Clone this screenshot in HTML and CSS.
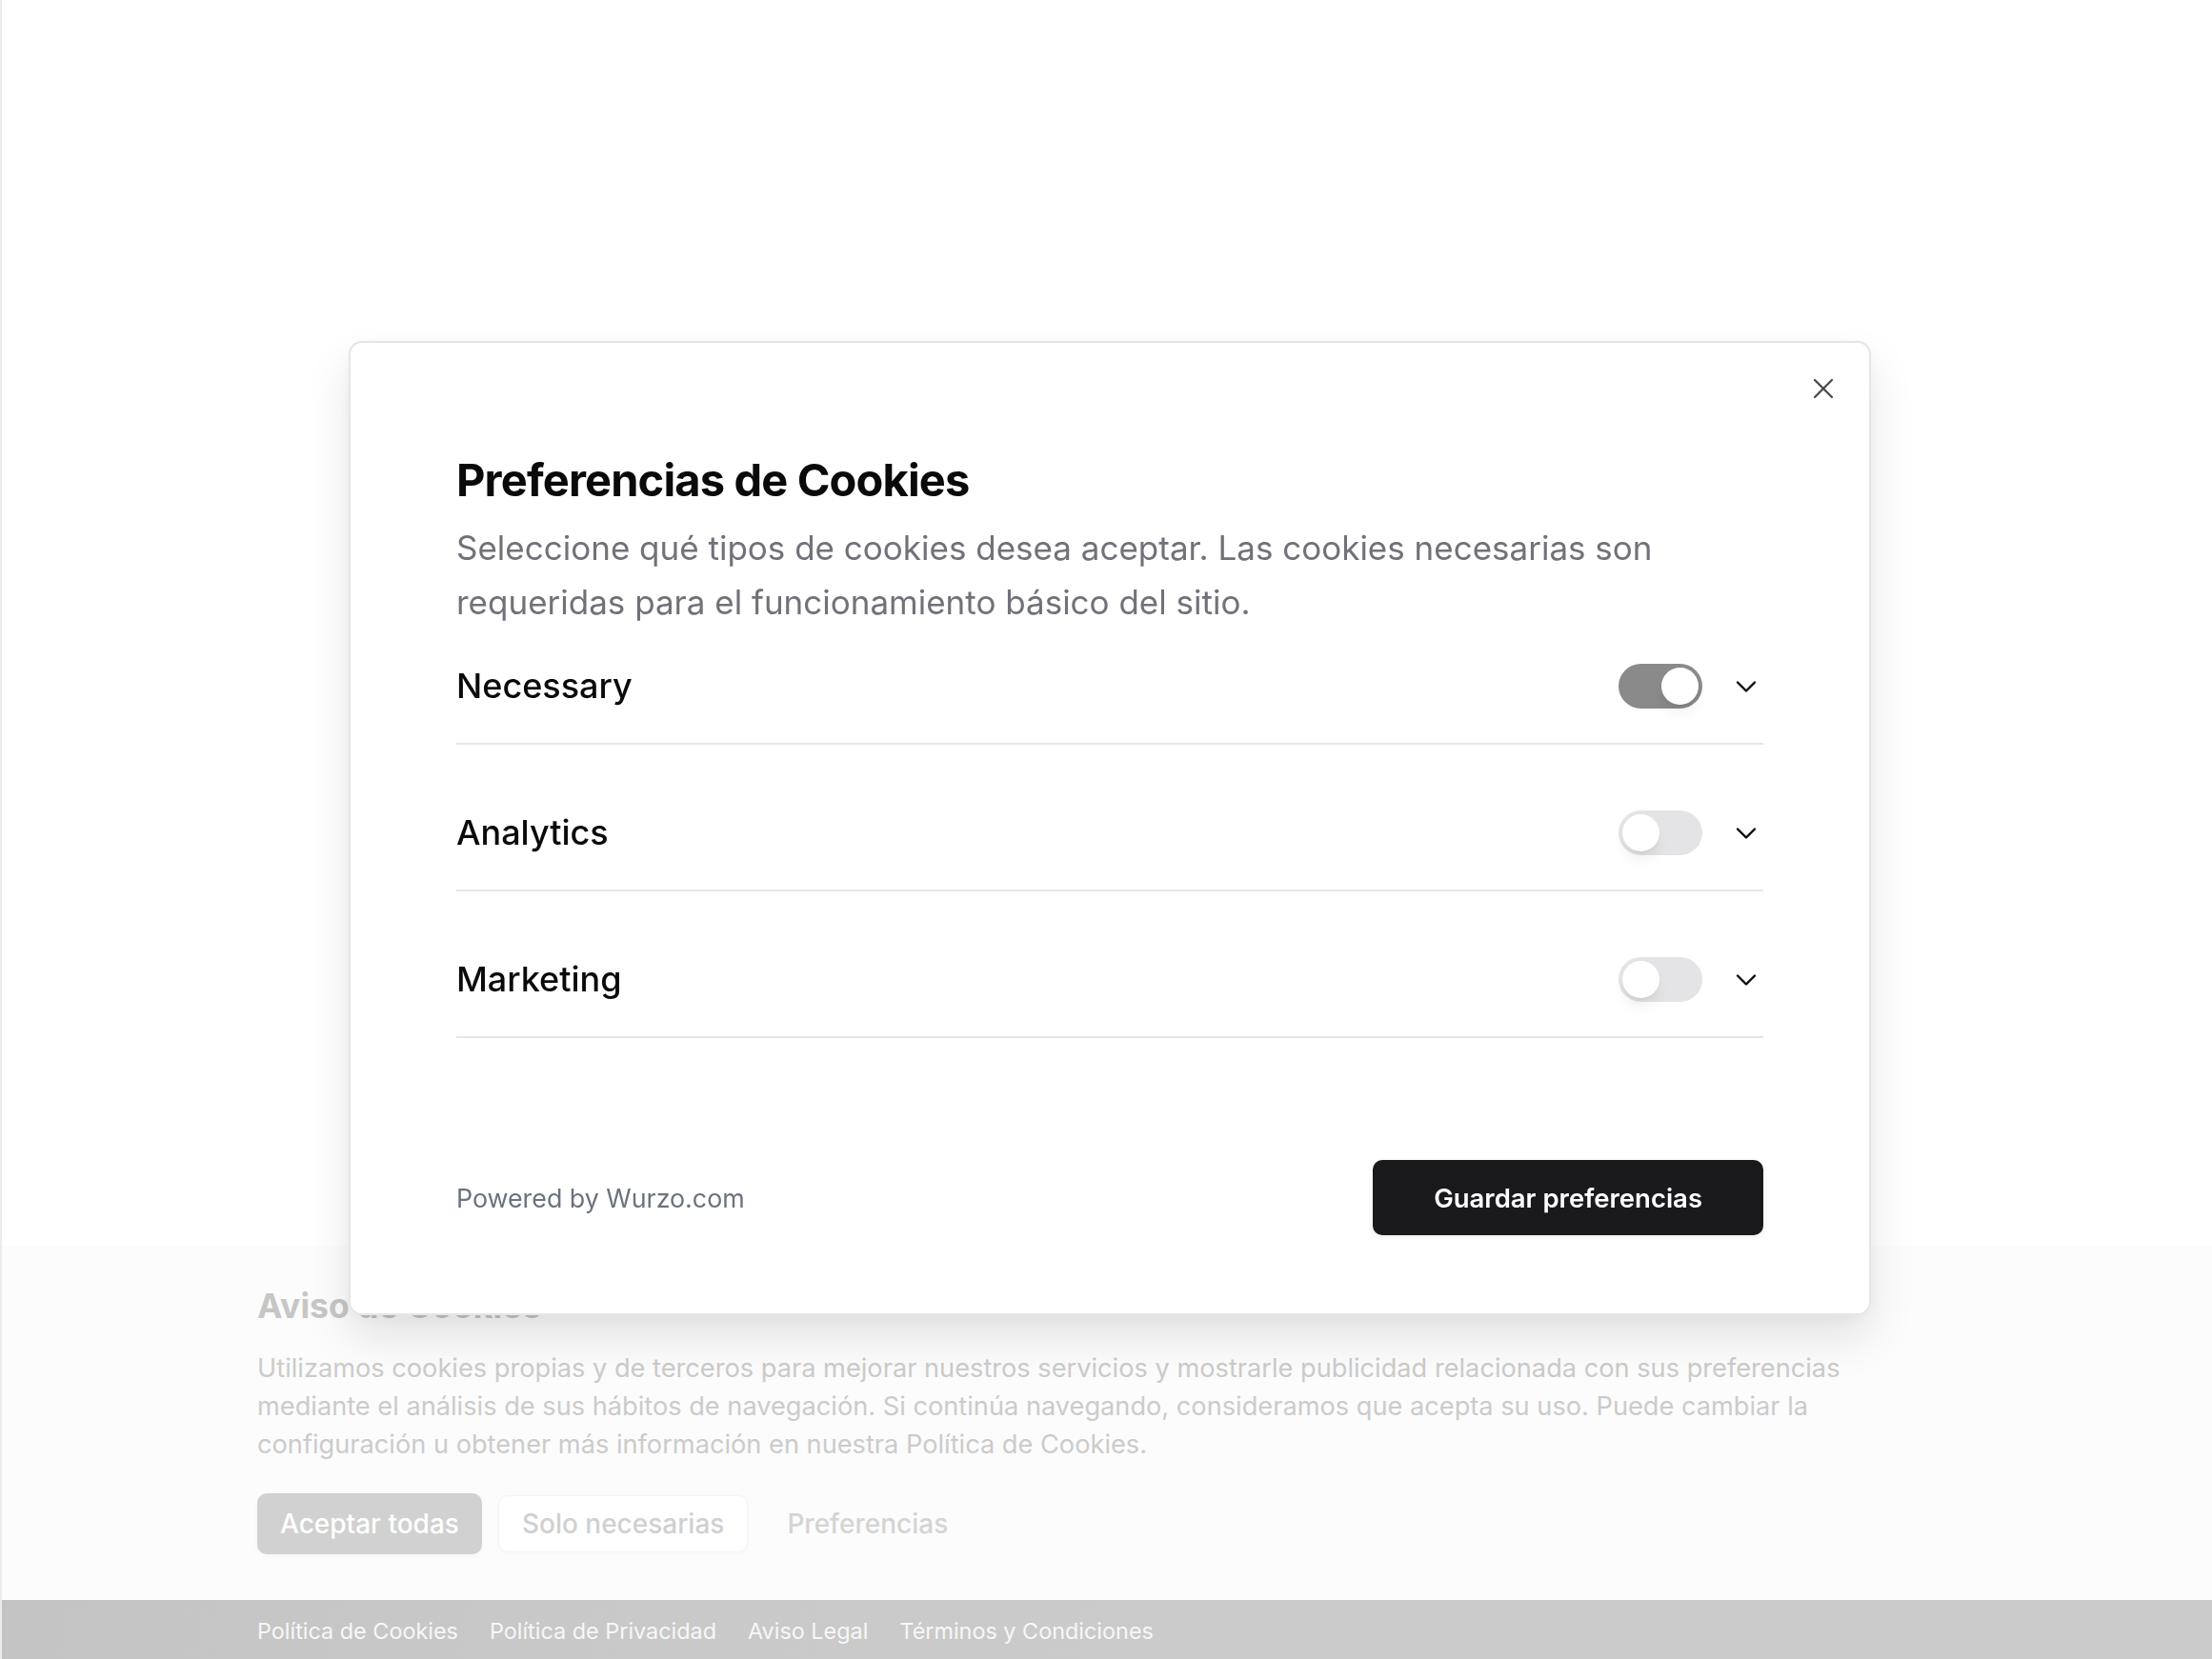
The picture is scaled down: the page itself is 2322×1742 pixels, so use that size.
FILE: index.html
```html
<!DOCTYPE html>
<html lang="es">
<head>
<meta charset="utf-8">
<title>Preferencias de Cookies</title>
<link rel="stylesheet" href="styles.css">
</head>
<body>
<div class="page">
  <main class="page-main"></main>
  <section class="banner">
    <div class="container">
      <h2 class="banner-title">Aviso de Cookies</h2>
      <p class="banner-text">Utilizamos cookies propias y de terceros para mejorar nuestros servicios y mostrarle publicidad relacionada con sus preferencias mediante el análisis de sus hábitos de navegación. Si continúa navegando, consideramos que acepta su uso. Puede cambiar la configuración u obtener más información en nuestra Política de Cookies.</p>
      <div class="banner-actions">
        <button class="btn btn-accept">Aceptar todas</button>
        <button class="btn btn-necessary">Solo necesarias</button>
        <button class="btn btn-prefs">Preferencias</button>
      </div>
    </div>
  </section>
  <footer class="site-footer">
    <nav class="container footer-links">
      <a href="#">Política de Cookies</a>
      <a href="#">Política de Privacidad</a>
      <a href="#">Aviso Legal</a>
      <a href="#">Términos y Condiciones</a>
    </nav>
  </footer>
</div>

<div class="overlay">
  <div class="modal" role="dialog" aria-labelledby="modal-title">
    <button class="modal-close" aria-label="Cerrar">
      <svg viewBox="0 0 24 24" width="36" height="36" fill="none" stroke="currentColor" stroke-width="1.5" stroke-linecap="round" stroke-linejoin="round"><path d="M18 6 6 18"/><path d="m6 6 12 12"/></svg>
    </button>
    <h1 class="modal-title" id="modal-title">Preferencias de Cookies</h1>
    <p class="modal-desc">Seleccione qué tipos de cookies desea aceptar. Las cookies necesarias son requeridas para el funcionamiento básico del sitio.</p>
    <div class="categories">
      <div class="category">
        <span class="category-name">Necessary</span>
        <div class="category-controls">
          <span class="toggle toggle-on"><span class="toggle-knob"></span></span>
          <svg class="chevron" viewBox="0 0 24 24" width="36" height="36" fill="none" stroke="currentColor" stroke-width="1.6" stroke-linecap="round" stroke-linejoin="round"><path d="m6 9 6 6 6-6"/></svg>
        </div>
      </div>
      <div class="category">
        <span class="category-name">Analytics</span>
        <div class="category-controls">
          <span class="toggle"><span class="toggle-knob"></span></span>
          <svg class="chevron" viewBox="0 0 24 24" width="36" height="36" fill="none" stroke="currentColor" stroke-width="1.6" stroke-linecap="round" stroke-linejoin="round"><path d="m6 9 6 6 6-6"/></svg>
        </div>
      </div>
      <div class="category">
        <span class="category-name">Marketing</span>
        <div class="category-controls">
          <span class="toggle"><span class="toggle-knob"></span></span>
          <svg class="chevron" viewBox="0 0 24 24" width="36" height="36" fill="none" stroke="currentColor" stroke-width="1.6" stroke-linecap="round" stroke-linejoin="round"><path d="m6 9 6 6 6-6"/></svg>
        </div>
      </div>
    </div>
    <div class="modal-footer">
      <span class="powered">Powered by Wurzo.com</span>
      <button class="btn-save">Guardar preferencias</button>
    </div>
  </div>
</div>
</body>
</html>
```

FILE: styles.css
```css
* { box-sizing: border-box; }

html, body {
  margin: 0;
  padding: 0;
  height: 100%;
  overflow: hidden;
}

body {
  font-family: Inter, "Noto Sans", "Liberation Sans", sans-serif;
  background: #ffffff;
  border-left: 2px solid #ececec;
  color: #0a0a0a;
}

button {
  font-family: inherit;
  cursor: pointer;
}

/* ---------- background page ---------- */
.page {
  display: flex;
  flex-direction: column;
  height: 100%;
}

.page-main {
  height: 1308px;
  flex: none;
}

.container {
  width: 1784px;
  margin: 0 auto;
}

.banner {
  background: #fcfcfc;
  padding: 40px 0 48px;
}

.banner-title {
  margin: 0;
  font-size: 35.5px;
  line-height: 48px;
  font-weight: 700;
  color: #c6c6c6;
}

.banner-text {
  margin: 21px 0 0;
  max-width: 1740px;
  font-size: 27.2px;
  line-height: 40px;
  color: #cbcbcb;
}

.banner-actions {
  margin-top: 31px;
  display: flex;
  align-items: center;
  gap: 17px;
  height: 64px;
}

.btn {
  font-size: 28px;
  font-weight: 500;
  border-radius: 10px;
  padding: 0 24px;
  border: 0;
}

.btn-accept {
  height: 64px;
  background: #d1d1d1;
  color: #ffffff;
  box-shadow: 0 2px 6px rgba(0, 0, 0, 0.03);
}

.btn-necessary {
  height: 60px;
  background: #ffffff;
  color: #d0d0d0;
  border: 1px solid #f4f4f4;
  box-shadow: 0 1px 4px rgba(0, 0, 0, 0.02);
}

.btn-prefs {
  height: 60px;
  background: transparent;
  color: #d4d4d4;
}

.site-footer {
  flex: 1;
  background: linear-gradient(90deg, #c4c4c4 0%, #c9c9c9 30%, #cbcbcb 55%, #cbcbcb 100%);
  padding: 15px 0 11px;
}

.footer-links {
  display: flex;
  gap: 33px;
}

.footer-links a {
  font-size: 23.4px;
  line-height: 36px;
  color: #f7f7f7;
  text-decoration: none;
}

/* ---------- modal ---------- */
.overlay {
  position: fixed;
  inset: 0;
  display: flex;
  align-items: center;
  justify-content: center;
  padding: 0 0 3px 8px;
}

.modal {
  position: relative;
  width: 1598px;
  background: #ffffff;
  border: 2px solid #e6e6e6;
  border-radius: 14px;
  padding: 116px 111px 82px;
  box-shadow: 0 24px 48px rgba(0, 0, 0, 0.10), 0 4px 16px rgba(0, 0, 0, 0.04);
}

.modal-close {
  position: absolute;
  top: 30px;
  right: 30px;
  width: 36px;
  height: 36px;
  padding: 0;
  border: 0;
  background: transparent;
  color: #4a4a4a;
  display: flex;
}

.modal-title {
  margin: 0;
  font-size: 47px;
  line-height: 56px;
  font-weight: 700;
  letter-spacing: -0.85px;
  color: #0a0a0a;
}

.modal-desc {
  margin: 15px 0 0;
  font-size: 35px;
  line-height: 57px;
  color: #71717a;
}

.categories {
  display: flex;
  flex-direction: column;
  gap: 33px;
}

.category {
  display: flex;
  align-items: center;
  justify-content: space-between;
  padding: 36px 0;
  border-bottom: 2px solid #e6e6e6;
}

.category-name {
  font-size: 36px;
  line-height: 47px;
  font-weight: 500;
  color: #0a0a0a;
}

.category-controls {
  display: flex;
  align-items: center;
  gap: 28px;
}

.toggle {
  display: flex;
  width: 88px;
  height: 47px;
  padding: 4px;
  border-radius: 999px;
  background: #e4e4e7;
}

.toggle-on {
  background: #8a8a8a;
  justify-content: flex-end;
}

.toggle-knob {
  width: 39px;
  height: 39px;
  border-radius: 50%;
  background: #ffffff;
  box-shadow: 0 10px 15px -3px rgba(0, 0, 0, 0.08), 0 4px 6px -4px rgba(0, 0, 0, 0.08);
}

.chevron {
  display: block;
  color: #0a0a0a;
}

.modal-footer {
  margin-top: 128px;
  display: flex;
  align-items: center;
  justify-content: space-between;
}

.powered {
  font-size: 26.8px;
  color: #6b7280;
}

.btn-save {
  height: 79px;
  padding: 0 64px;
  border: 0;
  border-radius: 10px;
  background: #1a1a1c;
  color: #ffffff;
  font-size: 27.5px;
  font-weight: 600;
  box-shadow: 0 2px 6px rgba(0, 0, 0, 0.08);
}
```
